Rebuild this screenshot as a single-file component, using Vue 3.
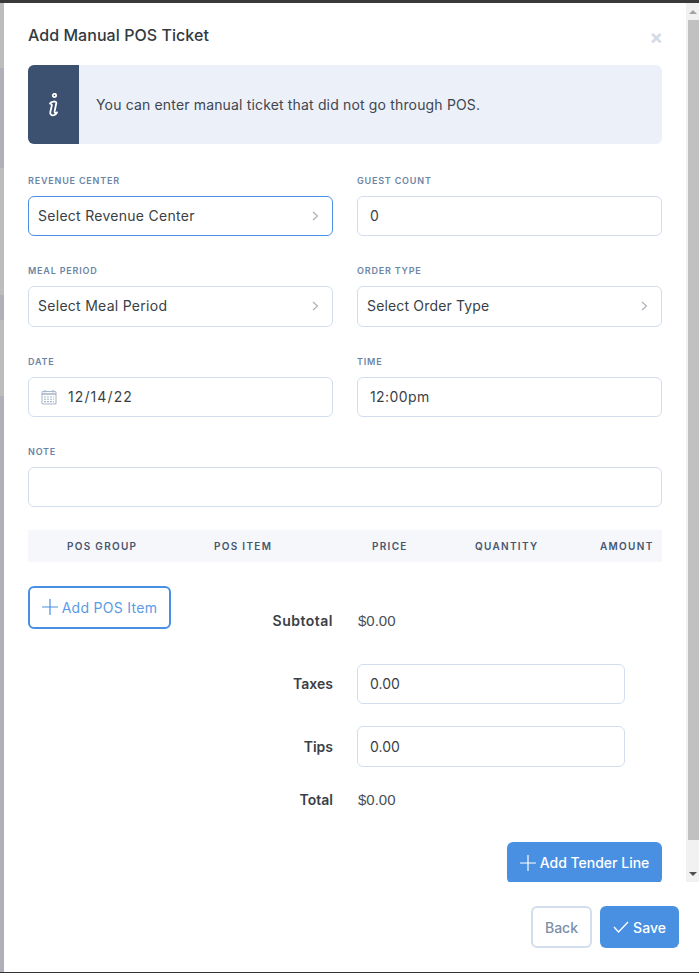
<script setup>
const rows = [
  [
    { label: 'Revenue Center', text: 'Select Revenue Center', chevron: true, focus: true },
    { label: 'Guest Count', text: '0', inset: true, raised: true }
  ],
  [
    { label: 'Meal Period', text: 'Select Meal Period', chevron: true },
    { label: 'Order Type', text: 'Select Order Type', chevron: true, tight: true }
  ],
  [
    { label: 'Date', text: '12/14/22', calendar: true },
    { label: 'Time', text: '12:00pm', inset: true, time: true }
  ]
]
const stripes = [
  { h: 65, c: '#bdbdbd' },
  { h: 100, c: '#b0b0b8' },
  { h: 127, c: '#bdbdbd' },
  { h: 25, c: '#b0b0b8' },
  { h: 76, c: '#bdbdbd' },
  { h: 576, c: '#b0b0b8' }
]
</script>

<template>
  <div class="screen">
    <div class="stripe">
      <i v-for="(s, n) in stripes" :key="n" :style="{ height: s.h + 'px', background: s.c }"></i>
    </div>
    <div class="modal">
      <div class="body">
        <div class="scroll">
          <div class="head">
            <h1>Add Manual POS Ticket</h1>
            <span class="close">×</span>
          </div>
          <div class="alert">
            <div class="alert-icon">
              <svg width="11" height="24" viewBox="0 0 11 24" fill="none" stroke="#fff" stroke-width="1.800" stroke-linecap="round" stroke-linejoin="round">
                <circle cx="6.500" cy="2.500" r="1.700" fill="#3c5070" />
                <path d="M2 10.500C3 8.500 8.500 7.500 8.300 10L6.600 18.500C6.400 20.300 7.800 20.400 9 19.300C8 22.800 1.800 23.800 2.300 19.300L3.900 12C4 11 2.800 11.200 2 10.500Z" />
              </svg>
            </div>
            <p>You can enter manual ticket that did not go through POS.</p>
          </div>

          <div v-for="(row, r) in rows" :key="r" class="row">
            <div v-for="f in row" :key="f.label" class="field">
              <label>{{ f.label }}</label>
              <div class="control" :class="{ focus: f.focus, inset: f.inset, pick: f.chevron, date: f.calendar, time: f.time, tight: f.tight, raised: f.raised }">
                <svg v-if="f.calendar" class="cal" width="16" height="16" viewBox="0 0 16 16" fill="none" stroke="#a9b8cc">
                  <rect x="1" y="2.500" width="14" height="12.500" rx="1" stroke-width="1.100" />
                  <path d="M1 5h14" stroke-width="1.600" />
                  <path d="M4 1v2.500M12 1v2.500" stroke-width="1.300" />
                  <path d="M3 8h10M3 10.300h10M3 12.600h10" stroke-width="1.100" stroke-dasharray="2 1" />
                </svg>
                <span>{{ f.text }}</span>
                <svg v-if="f.chevron" class="chev" width="7" height="10" viewBox="0 0 7 10" fill="none" stroke="#a8adb5" stroke-width="1.100">
                  <path d="M1 1l4.500 4L1 9" />
                </svg>
              </div>
            </div>
          </div>

          <div class="field note">
            <label>Note</label>
            <div class="control"></div>
          </div>

          <div class="thead">
            <span class="c1">POS Group</span>
            <span class="c2">POS Item</span>
            <span class="c3">Price</span>
            <span class="c4">Quantity</span>
            <span class="c5">Amount</span>
          </div>

          <div class="lower">
            <button class="btn outline">
              <svg width="16" height="16" viewBox="0 0 16 16" stroke="#4a90e2" stroke-width="1.200"><path d="M8 0v16M0 8h16" /></svg>
              Add POS Item
            </button>
            <div class="totals">
              <div class="tline sub"><b>Subtotal</b><span>$0.00</span></div>
              <div class="tline tax"><b>Taxes</b><div class="control inset short">0.00</div></div>
              <div class="tline tip"><b>Tips</b><div class="control inset short">0.00</div></div>
              <div class="tline tot"><b>Total</b><span>$0.00</span></div>
            </div>
          </div>

          <div class="tender">
            <button class="btn solid">
              <svg width="16" height="16" viewBox="0 0 16 16" stroke="#fff" stroke-width="1.200"><path d="M8 0v16M0 8h16" /></svg>
              Add Tender Line
            </button>
          </div>
        </div>
        <div class="scrollbar">
          <div class="arrow up"></div>
          <div class="track"><div class="thumb"></div></div>
          <div class="arrow down"></div>
        </div>
      </div>
      <div class="foot">
        <button class="btn back">Back</button>
        <button class="btn solid save">
          <svg width="16" height="12" viewBox="0 0 16 12" fill="none" stroke="#fff" stroke-width="1.300"><path d="M1 6l4.500 5L15 1" /></svg>
          Save
        </button>
      </div>
    </div>
  </div>
</template>

<style scoped>
.screen {
  width: 699px;
  height: 973px;
  box-sizing: border-box;
  border-top: 3px solid #3a3a3c;
  border-bottom: 1px solid #333;
  display: flex;
  overflow: hidden;
  background: #fff;
  font-family: Inter, "Noto Sans", sans-serif;
  color: #33373d;
}
.stripe { width: 4px; flex: none; display: flex; flex-direction: column; }
.stripe i { display: block; flex: none; }
.modal { flex: 1; display: flex; flex-direction: column; min-width: 0; }
.body { height: 879px; display: flex; overflow: hidden; flex: none; }
.scroll { flex: 1; padding: 0 24px; min-width: 0; }
.head { height: 62px; display: flex; justify-content: space-between; align-items: center; }
h1 { margin: 2px 0 0; font-size: 16px; font-weight: 500; letter-spacing: .05px; color: #333a42; }
.close { font-size: 20px; font-weight: 700; color: #d3dbe5; line-height: 1; margin: 5px -1px 0 0; }
.alert { height: 79px; display: flex; align-items: center; background: #ecf0f8; border-radius: 6px; overflow: hidden; }
.alert-icon { width: 51px; height: 100%; background: #3c5070; display: flex; align-items: center; justify-content: center; }
.alert p { margin: 0 0 0 17px; font-size: 14px; letter-spacing: .16px; color: #3f4650; }
.row { display: flex; gap: 24px; }
.alert + .row { margin-top: 29px; }
.field { flex: 1; min-width: 0; height: 90.330px; box-sizing: border-box; }
label { display: block; height: 23px; padding-top: 1px; box-sizing: border-box; font-size: 9px; font-weight: 600; letter-spacing: .8px; text-transform: uppercase; color: #6c85a5; line-height: 14px; }
.control {
  height: 40.330px;
  box-sizing: border-box;
  border: 1px solid #d2deed;
  border-radius: 6px;
  background: #fff;
  display: flex;
  align-items: center;
  padding: 0 9px;
  font-size: 14px;
  color: #3a3f46;
}
.control.inset { padding-left: 12px; }
.control.focus { border-color: #4a90e2; }
.control.pick { letter-spacing: .28px; padding-bottom: 1px; }
.control.tight { letter-spacing: .16px; }
.control.raised { padding-bottom: 1px; }
.control.date { letter-spacing: 1.100px; }
.control.time { letter-spacing: .4px; }
.control span { flex: 1; }
.chev { margin-right: 4px; }
.cal { margin: 0 11px 0 3px; }
.note { flex: none; height: 86px; }
.thead {
  height: 32px;
  display: flex;
  align-items: center;
  background: #f5f7fb;
  font-size: 10px;
  font-weight: 600;
  letter-spacing: 1.300px;
  text-transform: uppercase;
  color: #46566f;
}
.c1 { margin-left: 39px; width: 147px; }
.c2 { width: 158px; }
.c3 { width: 103px; }
.c4 { width: 125px; }
.c5 { flex: 1; }
.lower { display: flex; margin-top: 24px; height: 256px; }
.btn { box-sizing: border-box; font-family: inherit; font-size: 14px; font-weight: 500; border-radius: 6px; display: flex; align-items: center; justify-content: center; gap: 4px; cursor: pointer; }
.outline { width: 143px; height: 43px; border: 2px solid #4a90e2; background: #fff; color: #5a9be6; flex: none; font-weight: 400; letter-spacing: .3px; }
.solid { background: #4a90e2; border: 0; color: #fff; }
.totals { flex: 1; }
.tline { display: flex; align-items: center; font-size: 14px; }
.tline b { width: 162px; text-align: right; font-weight: 600; color: #3a3f46; margin-right: 24px; }
.sub b { letter-spacing: .5px; }
.tline span { font-family: "Liberation Sans", Arial, sans-serif; font-size: 15px; margin-left: 1px; color: #4a4f57; }
.short { width: 268px; }
.sub { height: 70px; }
.tax { height: 40px; margin-top: 8px; }
.tip { height: 41px; margin-top: 22px; }
.tot { height: 24px; margin-top: 21px; }
.tender { display: flex; justify-content: flex-end; }
.tender .btn { width: 155px; height: 42px; }
.foot { flex: 1; display: flex; justify-content: flex-end; gap: 8px; padding: 24px 20px 0 0; }
.foot .btn { height: 42px; }
.back { width: 61px; background: #fff; border: 2px solid #d2deed; color: #7d8fa8; }
.save { width: 79px; }
.scrollbar { width: 13px; flex: none; background: #f1f1f1; display: flex; flex-direction: column; }
.arrow { height: 17px; flex: none; display: flex; align-items: center; justify-content: center; }
.arrow::before { content: ""; border-left: 4px solid transparent; border-right: 4px solid transparent; }
.up::before { border-bottom: 4px solid #a3a3a3; }
.down::before { border-top: 4px solid #505050; }
.track { flex: 1; }
.thumb { height: 820px; background: #c1c1c1; margin-left: 2px; }
</style>
